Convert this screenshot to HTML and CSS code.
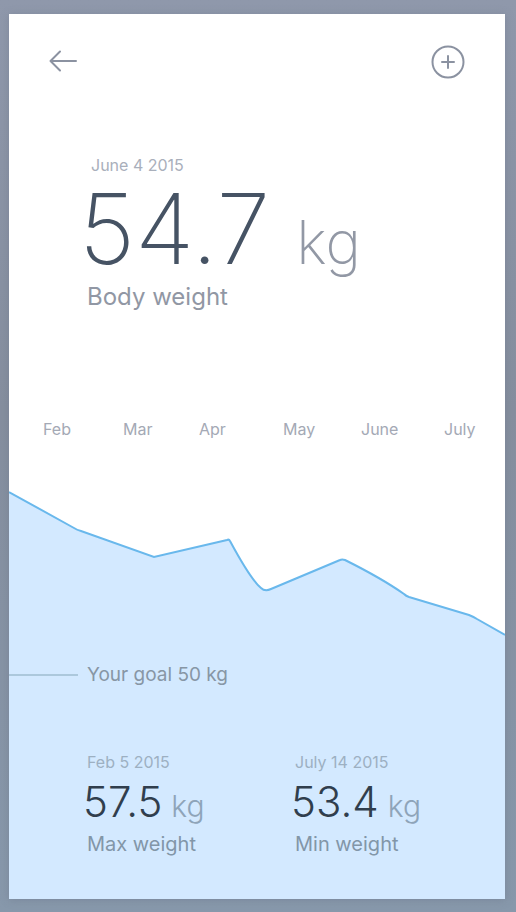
FILE: index.html
```html
<!DOCTYPE html>
<html lang="en">
<head>
<meta charset="utf-8">
<meta name="viewport" content="width=device-width, initial-scale=1">
<title>Body weight</title>
<link rel="stylesheet" href="styles.css">
</head>
<body>
<main class="card">
  <header class="bar">
    <button class="icon-button" type="button" aria-label="Back">
      <svg width="28" height="34" viewBox="0 0 28 34" fill="none" stroke="currentColor" stroke-width="2" stroke-linecap="round" stroke-linejoin="round"><path d="M27 16H1.500M11 6.500L1.500 16L11 25.500"/></svg>
    </button>
    <button class="icon-button" type="button" aria-label="Add measurement">
      <svg width="34" height="34" viewBox="0 0 34 34" fill="none" stroke="currentColor" stroke-width="2" stroke-linecap="round"><circle cx="17" cy="17" r="15.500"/><path d="M17 11v12M11 17h12"/></svg>
    </button>
  </header>
  <section class="current">
    <p class="date">June 4 2015</p>
    <p class="weight">54.7 <span class="unit">kg</span></p>
    <h1 class="title">Body weight</h1>
  </section>
  <section class="history">
    <ol class="months">
      <li>Feb</li><li>Mar</li><li>Apr</li><li>May</li><li>June</li><li>July</li>
    </ol>
    <svg class="chart" viewBox="0 0 496 160" preserveAspectRatio="none" role="img" aria-label="Weight from February to July">
      <path class="area" d="M0 11L65 47Q68 49 72 50L145 76L218 59Q220 58 221 60C235 86 246 102 252 107Q256 111 262 108L331 79Q333 78 336 79C362 92 378 101 395 113Q397 115 400 116L460 134Q465 136 468 138L496 154V160H0Z"/>
      <path class="line" d="M0 11L65 47Q68 49 72 50L145 76L218 59Q220 58 221 60C235 86 246 102 252 107Q256 111 262 108L331 79Q333 78 336 79C362 92 378 101 395 113Q397 115 400 116L460 134Q465 136 468 138L496 154"/>
    </svg>
  </section>
  <section class="summary">
    <p class="goal">Your goal 50 kg</p>
    <div class="records">
      <article>
        <p class="date">Feb 5 2015</p>
        <p class="record">57.5 <span class="record-unit">kg</span></p>
        <h2 class="label">Max weight</h2>
      </article>
      <article>
        <p class="date">July 14 2015</p>
        <p class="record">53.4 <span class="record-unit">kg</span></p>
        <h2 class="label">Min weight</h2>
      </article>
    </div>
  </section>
</main>
</body>
</html>
```
FILE: styles.css
```css
* {
  box-sizing: border-box;
}

body {
  min-height: 100vh;
  margin: 0;
  padding: 14px 11px 13px 9px;
  display: flex;
  background: linear-gradient(#8f98ab, #858e9e 45%, #8798ab);
  color: #9197a4;
  font-family: Inter, "Liberation Sans", sans-serif;
}

p,
h1,
h2,
ol {
  margin: 0;
  padding: 0;
  font-weight: 400;
}

.card {
  flex: 1;
  display: flex;
  flex-direction: column;
  background: #fff;
  box-shadow: 0 1px 8px #66708566;
}

.bar {
  display: flex;
  justify-content: space-between;
  padding: 31px 40px 0;
}

.icon-button {
  display: flex;
  padding: 0;
  border: 0;
  background: none;
  color: #8b92a1;
  cursor: pointer;
}

.current {
  padding: 74px 0 0 70px;
}

.date {
  padding-left: 12px;
  color: #a9afbb;
  font-size: 16px;
  line-height: 24px;
}

.weight {
  display: flex;
  align-items: baseline;
  gap: 26px;
  color: #465364;
  font-size: 97px;
  font-weight: 200;
  line-height: 104px;
}

.unit {
  color: #9298a5;
  font-size: 60px;
  font-weight: 200;
  line-height: 1;
}

.title {
  padding-left: 8px;
  font-size: 24px;
  line-height: 32px;
}

.months {
  display: grid;
  grid-template-columns: 80fr 76fr 84fr 78fr 83fr 61fr;
  padding: 104px 0 0 34px;
  color: #a4a9b5;
  font-size: 16px;
  line-height: 24px;
  list-style: none;
}

.chart {
  display: block;
  width: 100%;
  height: 160px;
  margin-top: 40px;
}

.area {
  fill: #d3e9ff;
}

.line {
  fill: none;
  stroke: #69b8ec;
  stroke-width: 2;
}

.summary {
  flex: 1;
  padding: 22px 0 40px;
  background: #d3e9ff;
}

.goal {
  display: flex;
  align-items: center;
  gap: 9px;
  color: #8796a5;
  font-size: 19px;
  line-height: 24px;
}

.goal::before {
  content: "";
  width: 69px;
  height: 2px;
  background: #acc8dc;
}

.records {
  display: grid;
  grid-template-columns: 208fr 214fr;
  padding: 63px 0 0 74px;
}

.records .date {
  padding-left: 4px;
  color: #9db0c2;
}

.record {
  display: flex;
  align-items: baseline;
  gap: 9px;
  color: #303e4d;
  font-size: 42px;
  font-weight: 300;
  line-height: 56px;
}

.record-unit {
  color: #8ea4b9;
  font-size: 30px;
  line-height: 1;
}

.label {
  padding-left: 4px;
  color: #8296a8;
  font-size: 20px;
  line-height: 28px;
}
```
